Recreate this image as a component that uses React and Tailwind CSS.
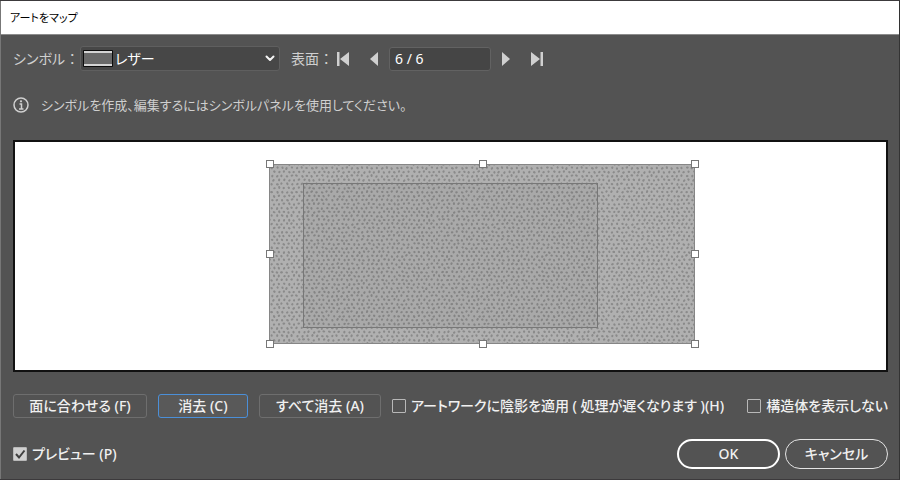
import React, { useState } from "react";

const TILE_COLS = 28;
const TILE_ROWS = 30;
const STEP_X = 5;
const STEP_Y = 4;

const noise = (n) => {
  const v = Math.sin(n * 127.1 + 11.7) * 43758.5453;
  return v - Math.floor(v);
};

const GRAINS = Array.from({ length: TILE_COLS * TILE_ROWS }, (_, i) => {
  const row = Math.floor(i / TILE_COLS);
  const col = i % TILE_COLS;
  return {
    x: col * STEP_X + (row % 2) * 2 + noise(i) * 1.2 + 1.4,
    y: row * STEP_Y + noise(i + 900) * 1.2 + 1.4,
    angle: noise(i + 1800) * 180,
    rx: 1.2 + noise(i + 2700) * 0.3,
  };
});

const HANDLES = [
  [255, 22],
  [468, 22],
  [680, 22],
  [255, 112],
  [680, 112],
  [255, 202],
  [468, 202],
  [680, 202],
];

const App = () => {
  const [preview, setPreview] = useState(true);
  const [shade, setShade] = useState(false);
  const [hideGeometry, setHideGeometry] = useState(false);

  return (
    <div className="border-y border-r border-y-[#3c3a3c] border-r-[#333333] bg-[#535353] font-['Noto_Sans','Noto_Sans_CJK_JP',sans-serif] text-[14px] leading-5 text-[#f0f0f0] [font-feature-settings:'palt']">
      <div className="border-l border-[#777777]">
        <header className="flex h-[34px] items-center border-b border-[#8c8c8c] bg-white px-[9px]">
          <h1 className="text-[11px] font-normal text-black">アートをマップ</h1>
        </header>

        <main className="pt-[11px] pr-[11px] pb-[10px] pl-3">
          <Toolbar />

          <p className="mt-6 flex items-center gap-3 text-[13px] text-[#cfcfcf]">
            <InfoIcon />
            シンボルを作成、編集するにはシンボルパネルを使用してください。
          </p>

          <div className="mt-[25px] border-2 border-[#111111] bg-white">
            <Artwork />
          </div>

          <div className="mt-[22px] flex items-center font-medium whitespace-nowrap">
            <div className="flex gap-[11px]">
              <PanelButton className="w-[134px] border-[#6e6e6e]">
                面に合わせる (F)
              </PanelButton>
              <PanelButton className="w-[90px] border-[#4b8fd8] bg-[#595959]">
                消去 (C)
              </PanelButton>
              <PanelButton className="w-[122px] border-[#6e6e6e]">
                すべて消去 (A)
              </PanelButton>
            </div>
            <div className="ml-[11px] flex grow justify-between">
              <Check checked={shade} onChange={setShade}>
                アートワークに陰影を適用 ( 処理が遅くなります )(H)
              </Check>
              <Check checked={hideGeometry} onChange={setHideGeometry}>
                構造体を表示しない
              </Check>
            </div>
          </div>

          <footer className="mt-[21px] flex items-center justify-between font-medium">
            <Check checked={preview} onChange={setPreview}>
              プレビュー (P)
            </Check>
            <div className="flex gap-[5px]">
              <button
                type="button"
                className="h-[30px] w-[103px] rounded-full border-2 border-white"
              >
                OK
              </button>
              <button
                type="button"
                className="h-[30px] w-[103px] rounded-full border border-[#e4e4e4]"
              >
                キャンセル
              </button>
            </div>
          </footer>
        </main>
      </div>
    </div>
  );
};

// Symbol picker and surface navigation
const Toolbar = () => (
  <div className="flex items-center text-[#d0d0d0]">
    <label htmlFor="symbol" className="w-[67px] whitespace-nowrap">
      シンボル ：
    </label>
    <div className="relative">
      <select
        id="symbol"
        className="h-[25px] w-[200px] appearance-none rounded-[3px] border border-[#5f5f5f] bg-[#474747] pl-[34px] text-white"
      >
        <option>レザー</option>
      </select>
      <svg
        className="pointer-events-none absolute top-1 left-[3px]"
        width="30"
        height="17"
      >
        <rect width="30" height="17" rx="1" fill="#0c0c0c" />
        <rect x="1" y="1" width="28" height="15" fill="#696969" />
        <path d="M1 2h28M1 15h28" stroke="#d4d4d4" strokeWidth="2" />
      </svg>
      <svg
        className="pointer-events-none absolute top-2 right-[5px]"
        width="10"
        height="9"
        fill="none"
        stroke="#f5f5f5"
        strokeWidth="2"
        strokeLinecap="round"
        strokeLinejoin="round"
      >
        <path d="M1.5 2.5l3.5 3.5 3.5-3.5" />
      </svg>
    </div>

    <label htmlFor="surface" className="ml-[11px] w-[46px] whitespace-nowrap">
      表面 ：
    </label>
    <NavButton label="最初の面">
      <path d="M0 0h2.5v14H0zM12 0v14L3 7z" />
    </NavButton>
    <NavButton label="前の面" className="ml-5">
      <path d="M8 0v14L0 7z" />
    </NavButton>
    <input
      id="surface"
      defaultValue="6 / 6"
      className="ml-[6px] h-6 w-[102px] rounded-[3px] border border-[#626262] bg-[#454545] px-[5px] text-white"
    />
    <NavButton label="次の面" className="ml-[11px]">
      <path d="M0 0l8 7-8 7z" />
    </NavButton>
    <NavButton label="最後の面" className="ml-4">
      <path d="M0 0l9 7-9 7zM9.5 0H12v14H9.500z" />
    </NavButton>
  </div>
);

const NavButton = ({ label, className = "", children }) => (
  <button type="button" aria-label={label} className={className}>
    <svg width="13" height="14" fill="#d0d0d0">
      {children}
    </svg>
  </button>
);

const PanelButton = ({ className, children }) => (
  <button type="button" className={`h-6 rounded-[3px] border ${className}`}>
    {children}
  </button>
);

const Check = ({ checked, onChange, children }) => (
  <label className="flex items-center gap-[5px]">
    <span className="relative flex">
      <input
        type="checkbox"
        checked={checked}
        onChange={(e) => onChange(e.target.checked)}
        className="size-[14px] appearance-none rounded-[1px] border border-[#b8b8b8] checked:bg-[#d0d0d0]"
      />
      {checked && (
        <svg
          className="pointer-events-none absolute inset-0"
          width="14"
          height="14"
          fill="none"
          stroke="#3f3f3f"
          strokeWidth="2"
        >
          <path d="M3 7l3 3.500L11.500 3.500" />
        </svg>
      )}
    </span>
    {children}
  </label>
);

const InfoIcon = () => (
  <svg width="16" height="16" fill="none" stroke="#d0d0d0" strokeWidth="1.500">
    <circle cx="8" cy="8" r="7" />
    <path d="M6.500 7h2v5M6 12h4.500" />
    <circle cx="8" cy="4.300" r="1.100" fill="#d0d0d0" stroke="none" />
  </svg>
);

// Leather symbol inside its bounding box, with the face outline on top
const Artwork = () => (
  <svg viewBox="0 0 871 228" className="block h-auto w-full">
    <defs>
      <pattern
        id="leather"
        width={TILE_COLS * STEP_X}
        height={TILE_ROWS * STEP_Y}
        patternUnits="userSpaceOnUse"
      >
        {GRAINS.map((g, i) => (
          <ellipse
            key={i}
            cx={g.x}
            cy={g.y}
            rx={g.rx}
            ry="1.1"
            fill="#8a8a8a"
            transform={`rotate(${g.angle} ${g.x} ${g.y})`}
          />
        ))}
      </pattern>
    </defs>
    <rect x="254.500" y="22.500" width="425" height="179" fill="#b0b0b0" />
    <rect
      x="254.500"
      y="22.500"
      width="425"
      height="179"
      fill="url(#leather)"
      stroke="#868686"
    />
    <rect
      x="288.500"
      y="41.500"
      width="294"
      height="144"
      fill="#000000"
      fillOpacity="0.04"
      stroke="#777777"
    />
    {HANDLES.map(([x, y]) => (
      <rect
        key={`${x}-${y}`}
        x={x - 3.5}
        y={y - 3.5}
        width="7"
        height="7"
        fill="#ffffff"
        stroke="#777777"
      />
    ))}
  </svg>
);

export default App;
